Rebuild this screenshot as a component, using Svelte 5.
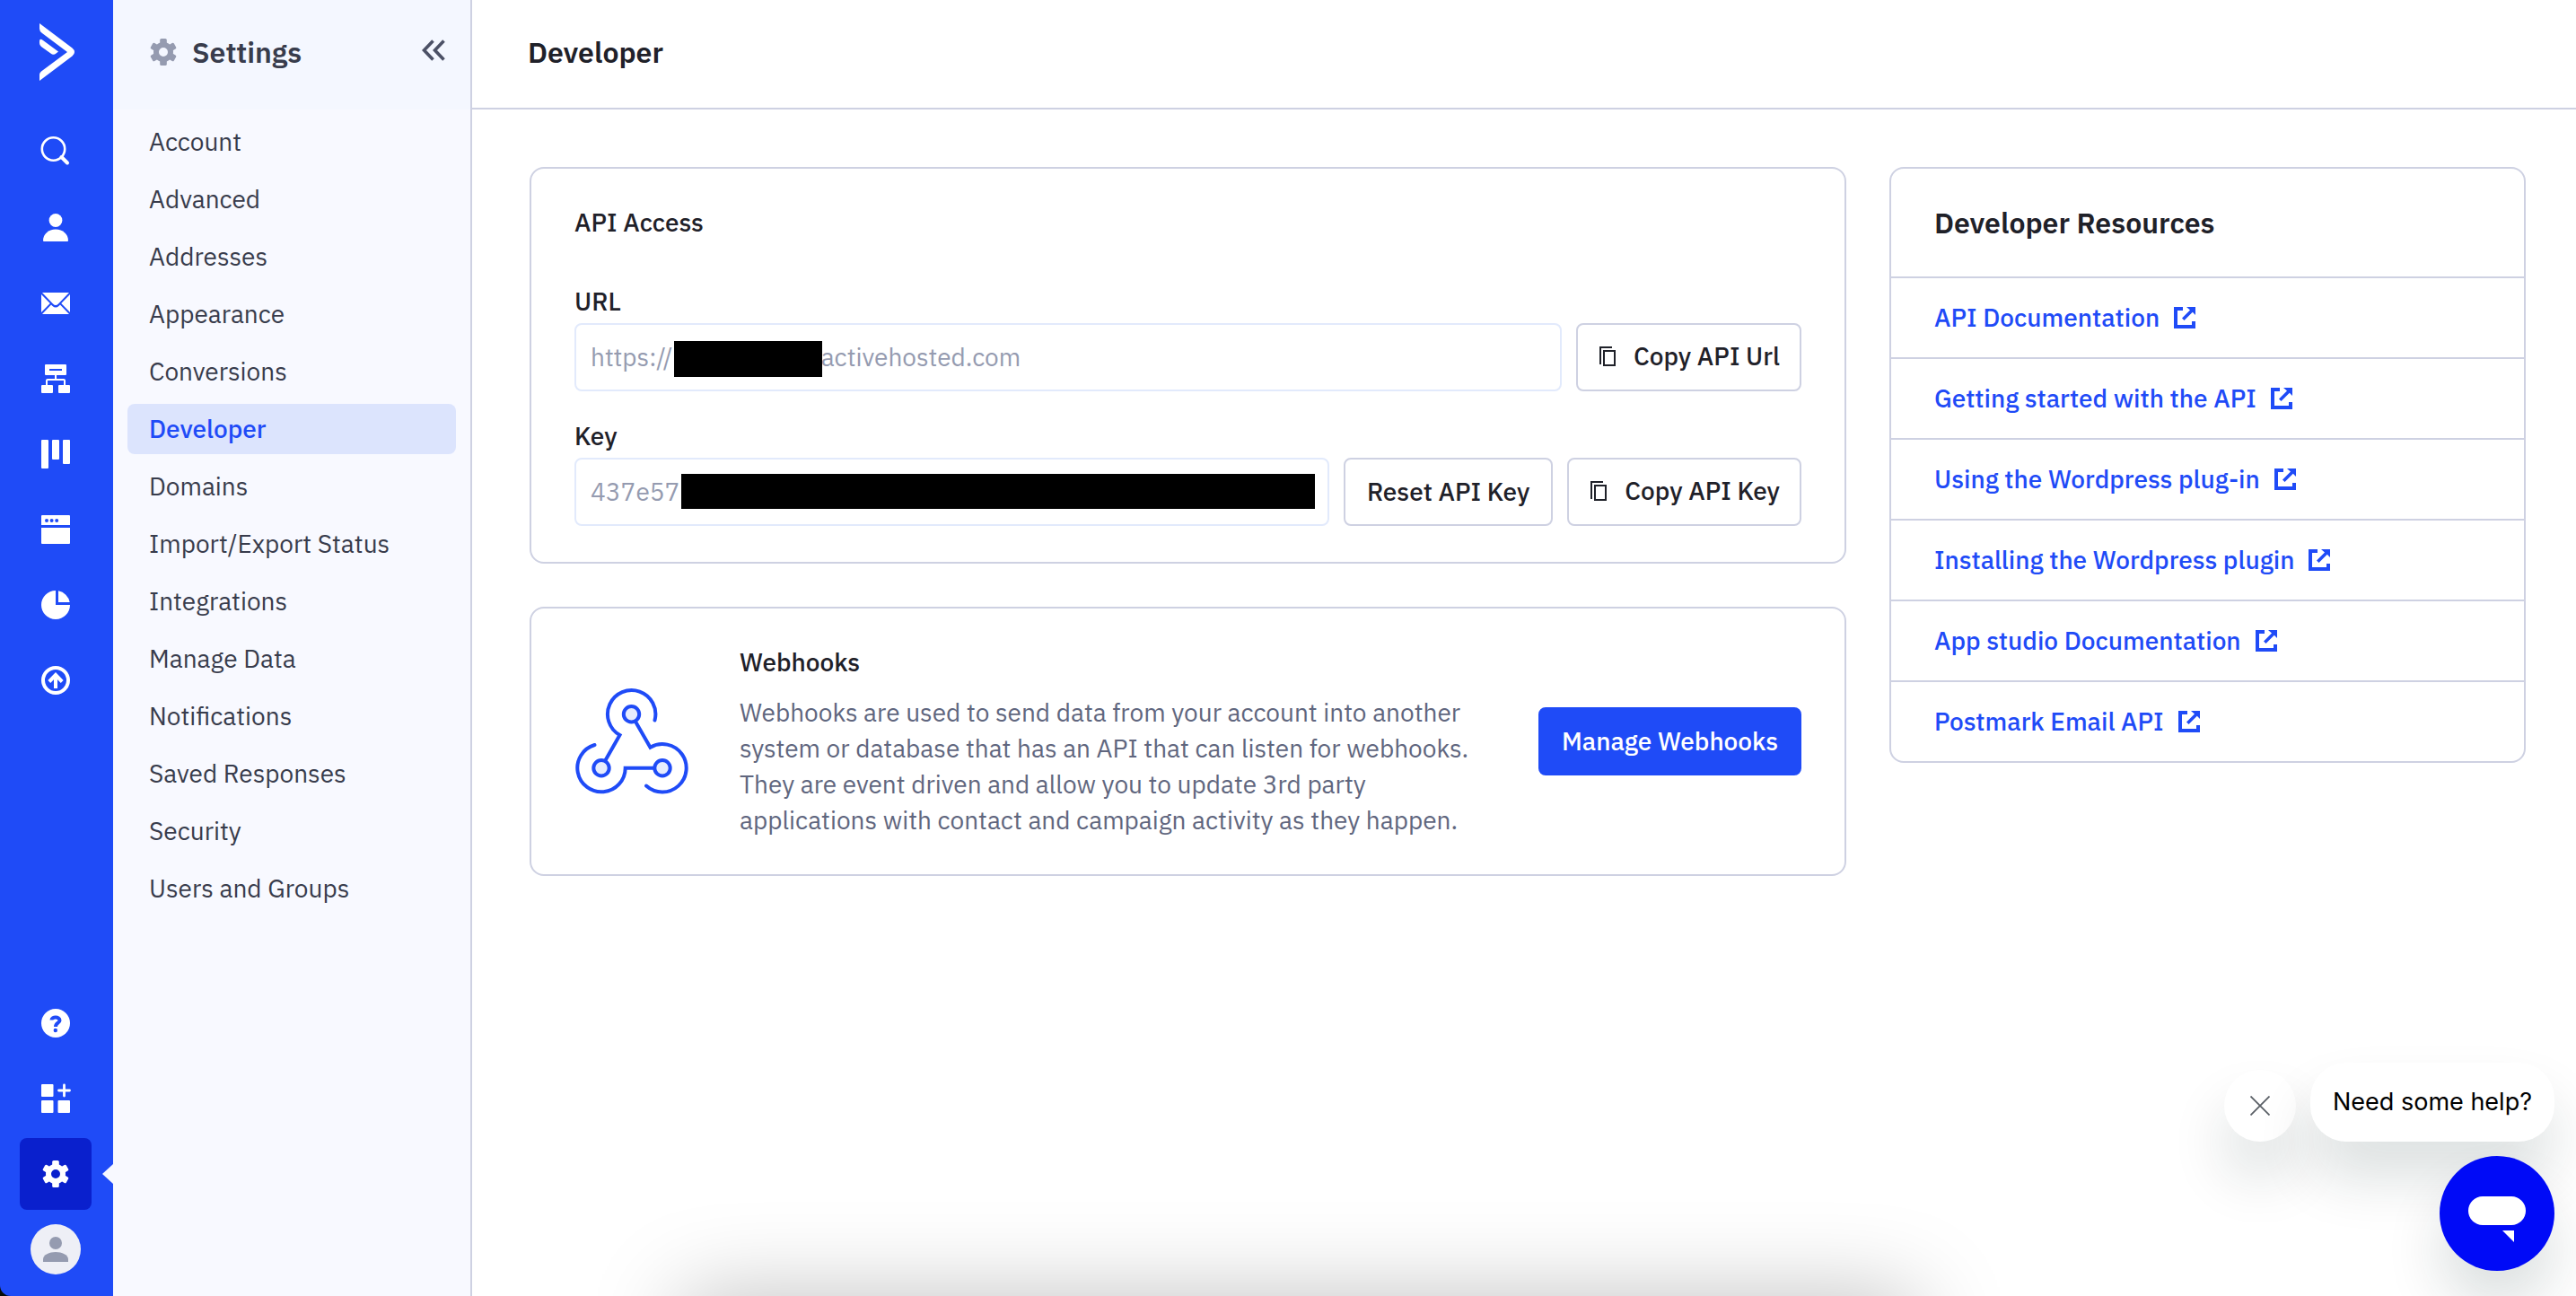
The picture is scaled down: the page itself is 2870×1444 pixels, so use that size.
<script>
  const navItems = [
    'Account', 'Advanced', 'Addresses', 'Appearance', 'Conversions', 'Developer', 'Domains',
    'Import/Export Status', 'Integrations', 'Manage Data', 'Notifications', 'Saved Responses',
    'Security', 'Users and Groups'
  ];
  const resources = [
    'API Documentation', 'Getting started with the API', 'Using the Wordpress plug-in',
    'Installing the Wordpress plugin', 'App studio Documentation', 'Postmark Email API'
  ];
  const railTop = [
    { id: 'search', label: 'Search' },
    { id: 'contacts', label: 'Contacts' },
    { id: 'campaigns', label: 'Campaigns' },
    { id: 'automations', label: 'Automations' },
    { id: 'deals', label: 'Deals' },
    { id: 'website', label: 'Website' },
    { id: 'reports', label: 'Reports' },
    { id: 'upgrade', label: 'Upgrade' }
  ];
  const railBottom = [
    { id: 'help', label: 'Help' },
    { id: 'apps', label: 'Apps' },
    { id: 'settings', label: 'Settings' }
  ];
  const gearTeeth = [0, 60, 120, 180, 240, 300];
  const hiddenGap = '\u00a0'.repeat(25);
  let current = $state('Developer');
  let url = $state(`https://${hiddenGap}activehosted.com`);
  let key = $state('437e57');
</script>

{#snippet gear()}
  <circle cx="14" cy="15" r="8" fill="none" stroke="currentColor" stroke-width="6" />
  {#each gearTeeth as angle}
    <rect x="10.200" y="0" width="7.600" height="8" rx="1.600" transform="rotate({angle} 14 15)" />
  {/each}
{/snippet}

{#snippet railIcon(id)}
  {#if id === 'settings'}
    <svg class="gear" viewBox="0 0 28 30" fill="currentColor" aria-hidden="true">{@render gear()}</svg>
  {:else}
    <svg class="glyph" viewBox="0 0 32 32" fill="currentColor" aria-hidden="true">
      {#if id === 'search'}
        <circle cx="13.500" cy="12" r="12.700" fill="none" stroke="currentColor" stroke-width="2.600" />
        <path d="M22.500 21L29 27.500" stroke="currentColor" stroke-width="4" stroke-linecap="round" />
      {:else if id === 'contacts'}
        <circle cx="16" cy="7.500" r="7.400" />
        <path d="M2 30C2 23 8 17.500 16 17.500S30 23 30 30Q30 31 29 31H3Q2 31 2 30Z" />
      {:else if id === 'campaigns'}
        <path d="M1 4H31L19 16.500Q16 19.500 13 16.500ZM0 6L9.800 16L0 26ZM32 6L22.200 16L32 26ZM11 17.500L12.500 19Q16 22 19.500 19L21 17.500L31 28H1Z" />
      {:else if id === 'automations'}
        <path fill-rule="evenodd" d="M5 0H27Q28 0 28 1V11Q28 12 27 12H17V16H25Q27 16 27 18V23H31Q32 23 32 24V31Q32 32 31 32H20Q19 32 19 31V24Q19 23 20 23H25V18H7V23H12Q13 23 13 24V31Q13 32 12 32H1Q0 32 0 31V24Q0 23 1 23H5V18Q5 16 7 16H15V12H5Q4 12 4 11V1Q4 0 5 0ZM9 5V7H23V5Z" />
      {:else if id === 'deals'}
        <rect width="8" height="32" rx="1" /><rect x="12" width="8" height="22" rx="1" /><rect x="24" width="8" height="27" rx="1" />
      {:else if id === 'website'}
        <path fill-rule="evenodd" d="M1 0H31Q32 0 32 1V11H0V1Q0 0 1 0ZM6 4A2 2 0 1 0 6 8A2 2 0 1 0 6 4ZM11.600 4A2 2 0 1 0 11.600 8A2 2 0 1 0 11.600 4ZM17.200 4A2 2 0 1 0 17.200 8A2 2 0 1 0 17.200 4Z" />
        <path d="M0 14H32V31Q32 32 31 32H1Q0 32 0 31Z" />
      {:else if id === 'reports'}
        <path d="M16 0A16 16 0 1 0 32 16H16ZM19 .3A16 16 0 0 1 31.700 13H19Z" />
      {:else if id === 'upgrade'}
        <circle cx="16" cy="16" r="14" fill="none" stroke="currentColor" stroke-width="4" />
        <path d="M16 25V11M8.800 17.500L16 10L23.200 17.500" fill="none" stroke="currentColor" stroke-width="4" />
      {:else if id === 'help'}
        <circle cx="16" cy="16" r="16" />
        <path class="cut" d="M11.500 12.500C11.500 8.500 20.500 8.500 20.500 13C20.500 16 16 15.500 16 20" />
        <circle class="cut-dot" cx="15.800" cy="24" r="2.200" />
      {:else if id === 'apps'}
        <rect width="13.500" height="14" rx="1" /><rect y="18" width="13.500" height="14" rx="1" /><rect x="18.500" y="18" width="13.500" height="14" rx="1" />
        <path d="M25.500 1V13M19.500 7H31.500" stroke="currentColor" stroke-width="2.800" stroke-linecap="round" />
      {/if}
    </svg>
  {/if}
{/snippet}

{#snippet copyIcon()}
  <svg class="copy" viewBox="0 0 18 22" fill="none" stroke="currentColor" stroke-width="2" aria-hidden="true">
    <path d="M14 1H1V20" /><rect x="5" y="5" width="12" height="16" />
  </svg>
{/snippet}

<div class="app">
  <nav class="rail" aria-label="Main">
    <a class="logo" href="#home" aria-label="Home">
      <svg viewBox="0 0 39 64" fill="#fff" aria-hidden="true">
        <path d="M0 0L36.500 27.500Q39 29.500 39 32T36.500 36.500L0 64V57Q0 55 2 53.500L31 32L3 11Q0 9 0 6Z" />
        <path d="M0 20Q0 16 4 19L21 31.500L18.500 33.500Q15.500 36 12.500 33.500L2 26Q0 24.500 0 22Z" />
      </svg>
    </a>
    {#each railTop as item}
      <button class="rail-btn" aria-label={item.label}>{@render railIcon(item.id)}</button>
    {/each}
    <span class="spacer"></span>
    {#each railBottom as item}
      <button class="rail-btn" class:active={item.id === 'settings'} aria-label={item.label}>{@render railIcon(item.id)}</button>
    {/each}
    <button class="rail-btn" aria-label="Profile">
      <span class="avatar">
        <svg viewBox="0 0 28 28" fill="currentColor" aria-hidden="true">
          <circle cx="14" cy="7" r="7" />
          <path d="M0 28V25C0 20 7 17 14 17S28 20 28 25V28Z" />
        </svg>
      </span>
    </button>
  </nav>

  <aside class="side">
    <header class="side-head">
      <svg class="gear muted" viewBox="0 0 28 30" fill="currentColor" aria-hidden="true">{@render gear()}</svg>
      <h2>Settings</h2>
      <button class="collapse" aria-label="Collapse menu">
        <svg viewBox="0 0 26 24" fill="none" stroke="currentColor" stroke-width="3.600" aria-hidden="true">
          <path d="M12.500 1.500L2.500 12L12.500 22.500M24.500 1.500L14.500 12L24.500 22.500" />
        </svg>
      </button>
    </header>
    <ul>
      {#each navItems as item}
        <li>
          <a href="#{item}" class:current={item === current} onclick={() => (current = item)}>{item}</a>
        </li>
      {/each}
    </ul>
  </aside>

  <main>
    <header class="top"><h1>Developer</h1></header>
    <div class="content">
      <div class="column">
        <section class="card api">
          <h3>API Access</h3>
          <div class="group">
            <label for="url">URL</label>
            <div class="line">
              <div class="field">
                <input id="url" type="text" readonly bind:value={url} />
                <span class="redact redact-url"></span>
              </div>
              <button class="btn with-icon">{@render copyIcon()}Copy API Url</button>
            </div>
          </div>
          <div class="group">
            <label for="key">Key</label>
            <div class="line">
              <div class="field">
                <input id="key" type="text" readonly bind:value={key} />
                <span class="redact redact-key"></span>
              </div>
              <button class="btn">Reset API Key</button>
              <button class="btn with-icon">{@render copyIcon()}Copy API Key</button>
            </div>
          </div>
        </section>

        <section class="card hooks">
          <svg class="hook-art" viewBox="0 0 128 120" fill="none" stroke="#1f4bf7" stroke-width="4" stroke-linecap="round" aria-hidden="true">
            <path d="M89.500 36.500A26.700 26.700 0 1 0 50.500 53L34 82" />
            <path d="M68 38L84.500 66.700A26.700 26.700 0 1 1 80 109.500" />
            <path d="M22.500 64A26.700 26.700 0 1 0 56.700 89.700H89" />
            <g fill="#e6ecfd"><circle cx="63.500" cy="29.700" r="8.700" /><circle cx="30" cy="89.700" r="8.700" /><circle cx="98" cy="89.700" r="8.700" /></g>
          </svg>
          <div class="hook-text">
            <h3>Webhooks</h3>
            <p>Webhooks are used to send data from your account into another system or database that has an API that can listen for webhooks. They are event driven and allow you to update 3rd party applications with contact and campaign activity as they happen.</p>
          </div>
          <button class="btn primary">Manage Webhooks</button>
        </section>
      </div>

      <section class="card resources">
        <h2>Developer Resources</h2>
        <ul>
          {#each resources as item}
            <li>
              <a href="#{item}">{item}
                <svg viewBox="0 0 24 24" fill="currentColor" aria-hidden="true">
                  <path d="M0 0H10V4H4V20H20V16H24V24H0ZM14 0H24V9L20.800 5.800L11.500 15L9 12.500L18 3.500Z" />
                </svg>
              </a>
            </li>
          {/each}
        </ul>
      </section>
    </div>
  </main>

  <div class="dock-shadow"></div>

  <div class="chat">
    <div class="prompt">
      <button class="dismiss" aria-label="Dismiss">
        <svg viewBox="0 0 22 22" stroke="currentColor" stroke-width="1.800" aria-hidden="true"><path d="M0.500 0.500L21.500 21.500M21.500 .5L.5 21.500" /></svg>
      </button>
      <button class="bubble">Need some help?</button>
    </div>
    <button class="launcher" aria-label="Open chat">
      <svg viewBox="0 0 64 52" fill="#fff" aria-hidden="true"><rect width="64" height="32" rx="16" /><path d="M38 38H51V51Z" /></svg>
    </button>
  </div>
</div>

<style>
  :global(body) {
    margin: 0;
    background: #fff;
  }
  .app {
    display: flex;
    position: relative;
    min-height: 100vh;
    overflow: hidden;
    background: linear-gradient(90deg, #080d08 126px, #fff 126px);
    color: #1f2129;
    font: 400 28px/40px 'IBM Plex Sans', Roboto, 'Liberation Sans', sans-serif;
  }
  h1, h2, h3, p, ul { margin: 0; padding: 0; }
  ul { list-style: none; }
  h1, h2 { font-size: 32px; line-height: 40px; font-weight: 600; }
  h3 { font-size: 28px; line-height: 40px; font-weight: 500; }
  button { font: inherit; border: 0; padding: 0; background: none; cursor: pointer; color: inherit; }
  a { text-decoration: none; color: inherit; }
  svg { display: block; flex: none; }

  .rail {
    display: flex;
    flex-direction: column;
    align-items: center;
    gap: 4px;
    flex: none;
    box-sizing: border-box;
    width: 126px;
    padding: 26px 2px 12px 0;
    background: #1f4bf7;
    border-bottom-left-radius: 12px;
    color: #fff;
  }
  .logo { margin: 0 0 36px 3px; }
  .logo svg { width: 39px; height: 64px; }
  .rail-btn {
    display: flex;
    align-items: center;
    justify-content: center;
    position: relative;
    width: 80px;
    height: 80px;
    border-radius: 8px;
  }
  .rail-btn.active { background: #0a20cd; }
  .rail-btn.active::after {
    content: '';
    position: absolute;
    right: -24px;
    top: 29px;
    border: 11px solid transparent;
    border-left: 0;
    border-right: 12px solid #f8f9ff;
  }
  .spacer { flex: 1; }
  .glyph { width: 32px; height: 32px; overflow: visible; }
  .gear { width: 28px; height: 30px; overflow: visible; }
  .cut { fill: none; stroke: #1f4bf7; stroke-width: 4; }
  .cut-dot { fill: #1f4bf7; }
  .avatar {
    display: flex;
    align-items: center;
    justify-content: center;
    width: 56px;
    height: 56px;
    border-radius: 50%;
    background: #eeeff6;
    color: #959bb0;
  }
  .avatar svg { width: 28px; height: 28px; }

  .side {
    flex: none;
    box-sizing: border-box;
    width: 400px;
    background: #f8f9ff;
    border-right: 2px solid #ced1e2;
    color: #383c4c;
  }
  .side-head {
    display: flex;
    align-items: center;
    gap: 18px;
    box-sizing: border-box;
    height: 122px;
    padding: 0 28px 6px 42px;
    background: #f4f7ff;
  }
  .muted { color: #959bb0; }
  .collapse { margin: 0 0 4px auto; color: #4c5166; }
  .collapse svg { width: 26px; height: 24px; }
  .side ul { display: grid; gap: 8px; padding: 8px 16px; }
  .side li a {
    display: block;
    padding: 8px 24px;
    border-radius: 8px;
  }
  .side li a.current { background: #dce4fd; color: #1f4bf7; font-weight: 500; }

  main { flex: 1; min-width: 0; background: #fff; }
  .top {
    display: flex;
    align-items: center;
    box-sizing: border-box;
    height: 122px;
    padding: 0 62px 4px;
    border-bottom: 2px solid #ced1e2;
  }
  .content {
    display: grid;
    grid-template-columns: minmax(0, 1467fr) minmax(0, 709fr);
    align-items: start;
    gap: 48px;
    padding: 64px 56px 64px 64px;
  }
  .column { display: grid; gap: 48px; }
  .card { border: 2px solid #ced1e2; border-radius: 16px; }
  .api { display: grid; gap: 30px; padding: 40px 48px; }
  .api h3 { margin-bottom: 18px; }
  .group { display: grid; gap: 4px; }
  label { font-weight: 500; }
  .line { display: flex; gap: 16px; }
  .field { position: relative; flex: 1; min-width: 0; }
  input {
    box-sizing: border-box;
    width: 100%;
    height: 76px;
    padding: 0 16px 2px;
    border: 2px solid #e2eafc;
    border-radius: 8px;
    background: #fff;
    color: #959bb0;
    font: inherit;
    outline: 0;
  }
  .redact { position: absolute; background: #000; }
  .redact-url { left: 111px; top: 20px; width: 165px; height: 40px; }
  .redact-key { left: 119px; right: 16px; top: 18px; height: 39px; }
  .btn {
    display: flex;
    align-items: center;
    gap: 20px;
    box-sizing: border-box;
    height: 76px;
    padding: 0 24px;
    border: 2px solid #ced1e2;
    border-radius: 8px;
    font-weight: 500;
    white-space: nowrap;
  }
  .with-icon { padding: 0 22px 2px 24px; }
  .copy { width: 18px; height: 22px; }
  .primary { background: #1f4bf7; border-color: #1f4bf7; color: #fff; }
  .hooks { display: flex; align-items: center; gap: 56px; padding: 40px 48px; }
  .hook-art { width: 128px; height: 120px; }
  .hook-text { flex: 1; min-width: 0; }
  .hook-text p { margin-top: 16px; color: #60667e; }

  .resources h2 { padding: 40px 48px; }
  .resources li {
    display: flex;
    align-items: center;
    box-sizing: border-box;
    height: 90px;
    padding: 0 48px;
    border-top: 2px solid #ced1e2;
  }
  .resources a { display: flex; align-items: center; gap: 16px; color: #1f4bf7; font-weight: 500; }
  .resources a svg { width: 24px; height: 24px; }

  .dock-shadow {
    position: absolute;
    left: 760px;
    right: 736px;
    bottom: -100px;
    height: 100px;
    box-shadow: 0 0 100px rgba(0, 0, 0, 0.25);
  }
  .chat {
    position: absolute;
    right: 24px;
    bottom: 28px;
    display: flex;
    flex-direction: column;
    align-items: flex-end;
    gap: 16px;
    font-family: Inter, sans-serif;
  }
  .prompt { display: flex; align-items: flex-end; gap: 16px; }
  .dismiss, .bubble, .launcher { box-shadow: 0 40px 64px rgba(9, 32, 36, 0.14); }
  .dismiss, .launcher { display: flex; align-items: center; justify-content: center; border-radius: 50%; }
  .dismiss { width: 80px; height: 80px; background: #fff; color: #5a5f66; }
  .dismiss svg { width: 22px; height: 22px; }
  .bubble { height: 88px; padding: 0 25px; border-radius: 40px; background: #fff; color: #000; font-size: 27px; }
  .launcher { box-sizing: border-box; width: 128px; height: 128px; padding-top: 14px; background: #000af7; }
  .launcher svg { width: 64px; height: 52px; }
</style>
